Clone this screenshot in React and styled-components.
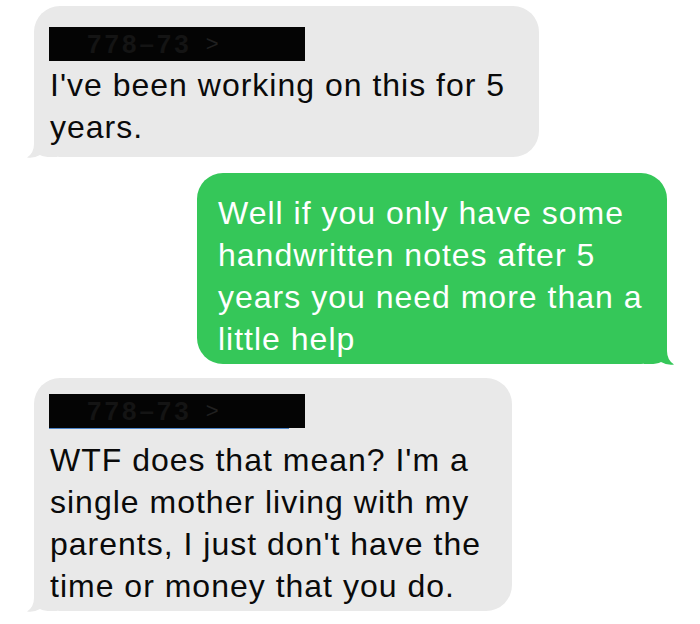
import React from 'react'
import styled, { createGlobalStyle } from 'styled-components'

const Global = createGlobalStyle`
  body {
    margin: 0;
    background: #ffffff;
    font-family: "Liberation Sans", Arial, sans-serif;
  }
`

const Thread = styled.div`
  display: flex;
  flex-direction: column;
  width: 700px;
  height: 624px;
  padding-top: 6px;
  box-sizing: border-box;
  overflow: hidden;
`

const Row = styled.div`
  display: flex;
  justify-content: ${props => props.$out ? 'flex-end' : 'flex-start'};
  padding: ${props => props.$out ? '0 33px 0 0' : '0 0 0 34px'};
  margin-top: ${props => props.$gap || 0}px;
`

const Bubble = styled.div`
  position: relative;
  isolation: isolate;
  width: ${props => props.$width}px;
  box-sizing: border-box;
  padding: ${props => props.$pad};

  background: ${props => props.$out ? '#35c759' : '#e9e9e9'};
  border-radius: 26px;

  color: ${props => props.$out ? '#ffffff' : '#0a0a0a'};
  font-size: 32px;
  letter-spacing: 1px;
  line-height: 42px;
  white-space: pre;
`

const Sender = styled.div`
  position: relative;
  display: flex;
  align-items: center;
  gap: 14px;

  width: 256px;
  height: 34px;
  margin: ${props => -props.$shift}px 0 ${props => props.$after}px -1px;
  padding-left: 38px;
  box-sizing: border-box;

  background: #040404;

  color: #141414;
  font-size: 26px;
  font-weight: bold;
  letter-spacing: 3px;
  line-height: 34px;
  white-space: nowrap;

  ${props => props.$underline && `
    &::after {
      content: '';
      position: absolute;
      left: 0;
      bottom: -1px;
      width: 240px;
      height: 1px;
      background: #4f86c9;
    }
  `}
`

const Chevron = styled.span`
  color: #202020;
  font-size: 22px;
  font-weight: normal;
  letter-spacing: 0;
`

const TailSvg = styled.svg`
  position: absolute;
  z-index: -1;
  bottom: -2px;
  ${props => props.$out ? 'right: -7px; transform: scaleX(-1);' : 'left: -7px;'}
`

const Tail = ({ out }) => (
  <TailSvg $out={out} width='30' height='28' viewBox='0 0 30 28'>
    <path
      d='M7 0 V13 Q7 22 0 26.5 Q7 27.5 13 24 Q17 26 24 26 H30 V0 Z'
      fill={out ? '#35c759' : '#e9e9e9'} />
  </TailSvg>
)

const Incoming = ({ width, shift, after, underline, pad, children, gap }) => (
  <Row $gap={gap}>
    <Bubble $width={width} $pad={pad}>
      <Tail />
      <Sender $shift={shift} $after={after} $underline={underline}>
        <span>778–73</span>
        <Chevron>&gt;</Chevron>
      </Sender>
      {children}
    </Bubble>
  </Row>
)

const Outgoing = ({ width, pad, children, gap }) => (
  <Row $out $gap={gap}>
    <Bubble $out $width={width} $pad={pad}>
      <Tail out />
      {children}
    </Bubble>
  </Row>
)

const App = () => (
  <>
    <Global />
    <Thread>
      <Incoming width={505} shift={0} after={3} pad='21px 28px 9px 16px'>
        {"I've been working on this for 5\nyears."}
      </Incoming>
      <Outgoing gap={16} width={470} pad='19px 28px 4px 21px'>
        {'Well if you only have some\nhandwritten notes after 5\nyears you need more than a\nlittle help'}
      </Outgoing>
      <Incoming gap={14} width={478} shift={5} after={11} underline pad='21px 28px 4px 16px'>
        {"WTF does that mean? I'm a\nsingle mother living with my\nparents, I just don't have the\ntime or money that you do."}
      </Incoming>
    </Thread>
  </>
)

export default App
